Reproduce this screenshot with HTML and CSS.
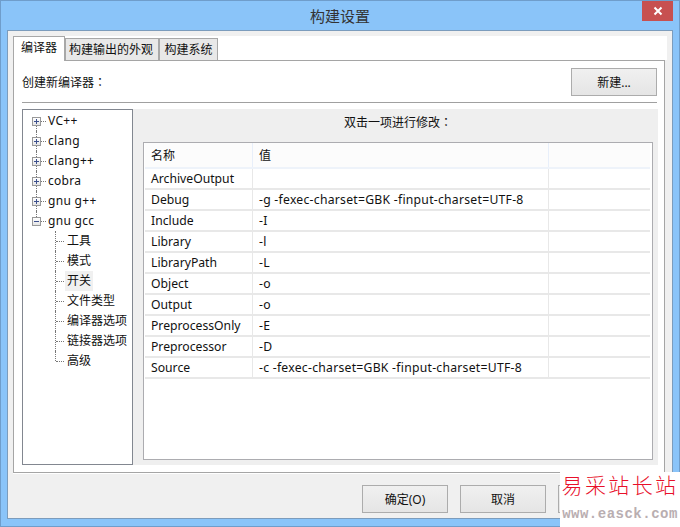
FILE: index.html
```html
<!DOCTYPE html>
<html lang="zh">
<head>
<meta charset="utf-8">
<title>构建设置</title>
<link rel="stylesheet" href="styles.css">
</head>
<body>
<div class="window">
  <div class="titlebar">
    <span class="title">构建设置</span>
    <span class="close"><svg width="10" height="10" viewBox="0 0 10 10"><path d="M1.5 1.5L8.5 8.5M8.5 1.5L1.5 8.5" stroke="#fff" stroke-width="2"/></svg></span>
  </div>
  <div class="client">
    <div class="tabs-zone">
      <div class="tabs">
        <div class="tab active">编译器</div>
        <div class="tab t2">构建输出的外观</div>
        <div class="tab t3">构建系统</div>
      </div>
      <div class="pane">
        <div class="new-row">
          <span>创建新编译器<span class="colon" lang="zh-TW">：</span></span>
          <button class="btn">新建...</button>
        </div>
        <div class="sep"></div>
        <div class="main">
          <div class="tree">
            <div class="node"><span class="box"><svg width="7" height="7" viewBox="0 0 7 7"><path d="M1 3.5H6M3.5 1V6" stroke="#3c4f8c"/></svg></span><span class="dash"></span><span class="lbl">VC++</span></div>
            <div class="node"><span class="box"><svg width="7" height="7" viewBox="0 0 7 7"><path d="M1 3.5H6M3.5 1V6" stroke="#3c4f8c"/></svg></span><span class="dash"></span><span class="lbl">clang</span></div>
            <div class="node"><span class="box"><svg width="7" height="7" viewBox="0 0 7 7"><path d="M1 3.5H6M3.5 1V6" stroke="#3c4f8c"/></svg></span><span class="dash"></span><span class="lbl">clang++</span></div>
            <div class="node"><span class="box"><svg width="7" height="7" viewBox="0 0 7 7"><path d="M1 3.5H6M3.5 1V6" stroke="#3c4f8c"/></svg></span><span class="dash"></span><span class="lbl">cobra</span></div>
            <div class="node"><span class="box"><svg width="7" height="7" viewBox="0 0 7 7"><path d="M1 3.5H6M3.5 1V6" stroke="#3c4f8c"/></svg></span><span class="dash"></span><span class="lbl">gnu g++</span></div>
            <div class="node last"><span class="box"><svg width="7" height="7" viewBox="0 0 7 7"><path d="M1 3.5H6" stroke="#3c4f8c"/></svg></span><span class="dash"></span><span class="lbl">gnu gcc</span></div>
            <div class="children">
              <div class="leaf"><span class="dash long"></span><span class="lbl">工具</span></div>
              <div class="leaf"><span class="dash long"></span><span class="lbl">模式</span></div>
              <div class="leaf"><span class="dash long"></span><span class="sel"><span class="lbl">开关</span></span></div>
              <div class="leaf"><span class="dash long"></span><span class="lbl">文件类型</span></div>
              <div class="leaf"><span class="dash long"></span><span class="lbl">编译器选项</span></div>
              <div class="leaf"><span class="dash long"></span><span class="lbl">链接器选项</span></div>
              <div class="leaf"><span class="dash long"></span><span class="lbl">高级</span></div>
            </div>
          </div>
          <div class="panel">
            <div class="hint">双击一项进行修改<span class="colon" lang="zh-TW">：</span></div>
            <div class="table">
              <div class="row head"><span>名称</span><span>值</span><span></span></div>
              <div class="row"><span>ArchiveOutput</span><span></span><span></span></div>
              <div class="row"><span>Debug</span><span>-g -fexec-charset=GBK -finput-charset=UTF-8</span><span></span></div>
              <div class="row"><span>Include</span><span>-I</span><span></span></div>
              <div class="row"><span>Library</span><span>-l</span><span></span></div>
              <div class="row"><span>LibraryPath</span><span>-L</span><span></span></div>
              <div class="row"><span>Object</span><span>-o</span><span></span></div>
              <div class="row"><span>Output</span><span>-o</span><span></span></div>
              <div class="row"><span>PreprocessOnly</span><span>-E</span><span></span></div>
              <div class="row"><span>Preprocessor</span><span>-D</span><span></span></div>
              <div class="row"><span>Source</span><span>-c -fexec-charset=GBK -finput-charset=UTF-8</span><span></span></div>
            </div>
          </div>
        </div>
      </div>
    </div>
    <div class="footer">
      <button class="btn">确定(O)</button>
      <button class="btn">取消</button>
      <button class="btn" aria-label="应用"></button>
    </div>
  </div>
  <div class="watermark">
    <div class="wm-cn">易采站长站</div>
    <div class="wm-url">www.easck.com</div>
  </div>
</div>
</body>
</html>
```
FILE: styles.css
```css
* { box-sizing: border-box; }
html, body { margin: 0; padding: 0; }
body { width: 680px; height: 527px; overflow: hidden; font-family: "Noto Sans", "Noto Sans CJK SC", sans-serif; font-size: 12px; color: #111; }
.window { position: relative; width: 680px; height: 527px; background: #8ac4f9; border: 1px solid #6f9dcb; padding: 0 6px 7px; display: flex; flex-direction: column; }
.titlebar { height: 29px; flex: none; display: flex; justify-content: center; align-items: center; position: relative; }
.title { font-size: 15px; color: #333; }
.close { position: absolute; top: 0; right: 0; width: 31px; height: 20px; background: #c75050; display: flex; align-items: center; justify-content: center; }
.client { flex: 1; background: #f0f0f0; border: 1px solid #7c9cbc; display: flex; flex-direction: column; min-height: 0; }
.colon { font-family: "Noto Sans CJK TC", sans-serif; }
.tabs-zone { padding: 5px 5px 0; height: 442px; flex: none; }
.tabs { display: flex; align-items: flex-end; height: 24px; background-color: #fff; position: relative; z-index: 1; }
.tab { height: 22px; border: 1px solid #a8a8a8; border-bottom: none; background: #e8e8e8; display: flex; align-items: center; justify-content: center; padding-bottom: 1px; }
.tab.active { width: 52px; height: 25px; background: #fff; padding-bottom: 5px; position: relative; z-index: 2; margin-bottom: -1px; }
.t2 { width: 94px; padding-right: 2px; }
.t3 { width: 59px; }
.pane { height: 413px; margin-right: 2px; background: #fff; border: 1px solid #a5a5a5; padding: 7px 7px 7px 8px; box-shadow: 0 1px 0 #fff; }
.new-row { height: 28px; display: flex; justify-content: space-between; align-items: center; }
.btn { width: 86px; height: 28px; border: 1px solid #acacac; background: linear-gradient(#f0f0f0, #e5e5e5); font: 12px "Noto Sans", "Noto Sans CJK SC", sans-serif; color: #111; padding: 0; }
.sep { height: 1px; background: #a0a0a0; margin-top: 6px; }
.main { display: flex; margin-top: 6px; height: 356px; margin-right: -1px; }
.tree { width: 111px; flex: none; background: #fff; border: 1px solid #828790; padding-top: 1px; }
.node { height: 20px; display: flex; align-items: center; padding-left: 9px; position: relative; letter-spacing: .3px; }
.node::before { content: ""; position: absolute; left: 13px; top: 0; bottom: 0; border-left: 1px dotted #777; }
.node:first-child::before { top: 10px; }
.node.last::before { bottom: 10px; }
.box { width: 9px; height: 9px; border: 1px solid #999; background: linear-gradient(#fff, #e4e4e4); display: flex; align-items: center; justify-content: center; position: relative; z-index: 1; }
.box svg { display: block; }
.dash { width: 5px; border-top: 1px dotted #777; margin: 0 2px 0 0; }
.lbl { padding-bottom: 2px; }
.leaf { height: 20px; display: flex; align-items: center; padding-left: 33px; position: relative; }
.leaf::before { content: ""; position: absolute; left: 32px; top: 0; bottom: 0; border-left: 1px dotted #777; }
.leaf:last-child::before { bottom: 10px; }
.dash.long { width: 8px; margin: 0 3px 0 0; }
.sel { background: #f0f0f0; height: 20px; display: flex; align-items: center; padding: 0 2px; margin-left: -2px; }
.panel { flex: 1; background: #efefef; padding: 0 5px 5px 10px; display: flex; flex-direction: column; }
.hint { height: 33px; flex: none; line-height: 26px; text-align: center; }
.table { flex: 1; background: #fff; border: 1px solid #acacb0; }
.row { display: grid; grid-template-columns: 108px 296px 1fr; height: 21px; border-bottom: 2px solid #e8e8e8; margin: 0 2px 0 1px; }
.row span { display: flex; align-items: center; padding-left: 6px; border-right: 1px solid #e8e8e8; font-size: 12.2px; white-space: nowrap; }
.row span:nth-child(2) { letter-spacing: .26px; }
.row span:last-child { border-right: none; }
.row.head { height: 26px; background: #fcfcfc; border-bottom: 2px solid #eef3fa; }
.row.head span { font-size: 12px; border-right-color: #e8effa; }
.footer { flex: 1; display: flex; justify-content: flex-end; gap: 12px; padding: 12px 29px 0 0; margin-right: -1px; }
.watermark { position: absolute; left: 559px; top: 471px; width: 120px; height: 55px; background: #fff; display: flex; flex-direction: column; align-items: center; }
.wm-cn { font-family: "Noto Sans CJK SC", sans-serif; font-weight: 300; color: #e8102a; font-size: 21px; letter-spacing: 2.4px; line-height: 28px; margin-top: -2px; white-space: nowrap; }
.wm-url { font-family: "Liberation Mono", monospace; color: #b9aeb1; font-size: 14px; letter-spacing: .5px; line-height: 16px; margin-top: 8px; white-space: nowrap; font-weight: 700; }
```
